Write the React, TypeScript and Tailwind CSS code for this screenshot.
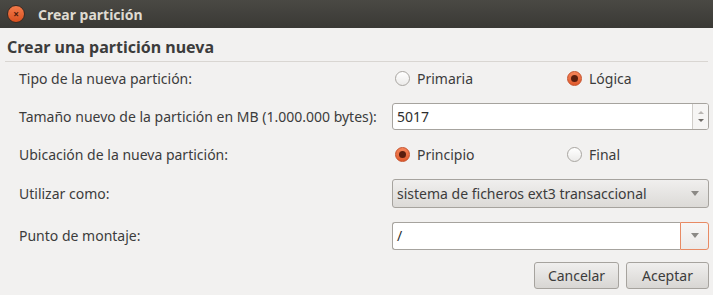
import type { ReactNode } from "react";

const font = { fontFamily: "'Noto Sans', 'DejaVu Sans', sans-serif" };

function Radio({ checked, label }: { checked?: boolean; label: string }) {
  return (
    <div className="flex items-center gap-[7px]">
      {checked ? (
        <span className="w-[15px] h-[15px] rounded-full border border-[#c5502a] bg-gradient-to-b from-[#f5855a] to-[#e05a2b] flex items-center justify-center">
          <span className="w-[7px] h-[7px] rounded-full bg-[#5a1e0e]" />
        </span>
      ) : (
        <span className="w-[15px] h-[15px] rounded-full border border-[#a9a6a1] bg-gradient-to-b from-white to-[#ecebe9]" />
      )}
      <span>{label}</span>
    </div>
  );
}

function Row({ label, children, h }: { label: string; children: ReactNode; h: string }) {
  return (
    <div className={`flex items-center ${h}`}>
      <div className="w-[392px] pl-[19px] shrink-0 whitespace-nowrap">{label}</div>
      <div className="flex-1">{children}</div>
    </div>
  );
}

function Arrow() {
  return (
    <svg width="8" height="5" viewBox="0 0 8 5">
      <path d="M0 0 L8 0 L4 5 Z" fill="#8b8985" />
    </svg>
  );
}

export default function App() {
  return (
    <div className="w-[713px] h-[295px] bg-[#f2f1f0] text-[#3c3c3c] text-[14px] overflow-hidden" style={font}>
      <div className="h-[28px] bg-gradient-to-b from-[#4a4944] to-[#3a3935] flex items-center">
        <span className="ml-[7px] w-[18px] h-[18px] rounded-full bg-gradient-to-b from-[#f47b4a] to-[#d9501e] border border-[#3a2a22] flex items-center justify-center text-[#4a1b0b] text-[10px] font-bold leading-none">
          ×
        </span>
        <span className="ml-[13px] font-bold text-[#dfdbd2] text-[14px]">Crear partición</span>
      </div>

      <div className="px-[5px] pt-[8px]">
        <div className="pl-[2px] font-bold text-[16px] text-[#3c3c3c] leading-[22px] pb-[3px] border-b border-[#d9d6d2]">
          Crear una partición nueva
        </div>
      </div>

      <div className="pr-[4px]">
        <Row label="Tipo de la nueva partición:" h="h-[32px]">
          <div className="flex pl-[3px]">
            <div className="w-[172px]">
              <Radio label="Primaria" />
            </div>
            <Radio checked label="Lógica" />
          </div>
        </Row>
        <Row label="Tamaño nuevo de la partición en MB (1.000.000 bytes):" h="h-[45px]">
          <div className="flex h-[27px] border border-[#a6a39e] rounded-[3px] bg-white overflow-hidden">
            <div className="flex-1 flex items-center pl-[4px] text-[#2e2e2e]">5017</div>
            <div className="w-[16px] border-l border-[#d0cdc9] bg-[#f6f5f4] flex flex-col items-center justify-center gap-[5px]">
              <svg width="6" height="3" viewBox="0 0 6 3">
                <path d="M0 3 L6 3 L3 0 Z" fill="#b9b6b2" />
              </svg>
              <svg width="6" height="3" viewBox="0 0 6 3">
                <path d="M0 0 L6 0 L3 3 Z" fill="#6e6b67" />
              </svg>
            </div>
          </div>
        </Row>
        <Row label="Ubicación de la nueva partición:" h="h-[30px]">
          <div className="flex pl-[3px]">
            <div className="w-[172px]">
              <Radio checked label="Principio" />
            </div>
            <Radio label="Final" />
          </div>
        </Row>
        <Row label="Utilizar como:" h="h-[49px]">
          <div className="h-[29px] border border-[#a6a39e] rounded-[3px] bg-gradient-to-b from-[#f0efee] to-[#dcdad7] flex items-center justify-between pl-[4px] pr-[9px] text-[#3c3c3c]">
            <span>sistema de ficheros ext3 transaccional</span>
            <Arrow />
          </div>
        </Row>
        <Row label="Punto de montaje:" h="h-[35px]">
          <div className="flex h-[28px]">
            <div className="flex-1 border border-r-0 border-[#a6a39e] rounded-l-[3px] bg-white flex items-center pl-[4px] text-[#2e2e2e]">
              /
            </div>
            <div className="w-[29px] border border-[#e88a63] rounded-r-[3px] bg-gradient-to-b from-[#f7f6f5] to-[#eceae8] flex items-center justify-center">
              <Arrow />
            </div>
          </div>
        </Row>
        <div className="flex justify-end gap-[7px] mt-[9px]">
          <button className="w-[85px] h-[27px] border border-[#a6a39e] rounded-[3px] bg-gradient-to-b from-[#f0efee] to-[#d8d6d3] text-[#3c3c3c]">
            Cancelar
          </button>
          <button className="w-[83px] h-[27px] border border-[#a6a39e] rounded-[3px] bg-gradient-to-b from-[#f0efee] to-[#d8d6d3] text-[#3c3c3c]">
            Aceptar
          </button>
        </div>
      </div>
    </div>
  );
}
